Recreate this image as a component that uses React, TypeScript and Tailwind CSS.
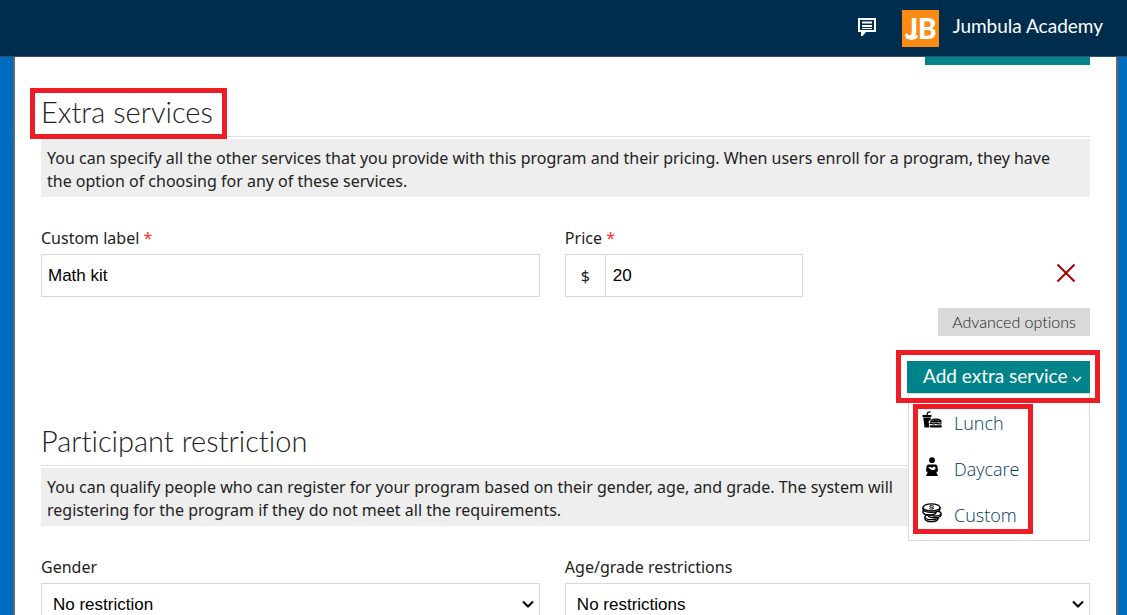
import type { ReactNode } from 'react'

const fieldText = "font-['Liberation_Sans',Arial,sans-serif] text-[17px] text-black"
const titleFont = 'font-[Lato,sans-serif] [font-variant-ligatures:none]'

function MessageIcon() {
  return (
    <svg width="20" height="20" viewBox="0 0 20 20" fill="none" className="mb-0.5" aria-hidden="true">
      <path d="M1 1h18v14H9L5.500 19H4v-4H1z" fill="#fff" />
      <path d="M3 3h14v10H3z" fill="#002d4e" />
      <path d="M5 5.500h10M5 9h10" stroke="#fff" strokeWidth="2" />
      <path d="M5 11.500h10" stroke="#fff" strokeWidth="1" />
    </svg>
  )
}

function Logo() {
  return (
    <svg width="37" height="37" viewBox="0 0 37 37" role="img" aria-label="Jumbula">
      <rect width="37" height="37" fill="#fa8c16" />
      <text x="4" y="29" fill="#fff" fontFamily="Lato, sans-serif" fontWeight="900" fontSize="28">JB</text>
      <path d="M4.500 25c1 4 7 4.500 10 1.500" stroke="#fff" strokeWidth="3" fill="none" strokeLinecap="round" />
    </svg>
  )
}

function LunchIcon() {
  return (
    <svg width="20" height="20" viewBox="0 0 20 20" className="mb-1" aria-hidden="true">
      <path d="M4.800 4.500L5.600 1.800 8.500.6" stroke="#000" strokeWidth="1.200" fill="none" />
      <path d="M.5 4h9v2H.5zM1.200 6.500h7.600V8.500C7 9.500 6.300 11 6.800 12.500L7.300 16.500H2.500z" />
      <path d="M8 11.400c.5-3.400 3-3.800 6-3.800s5.500.6 5.800 3.800z" />
      <path d="M7.500 12.700c2-.9 3.500.8 5 0s3.500.8 7 0" stroke="#000" strokeWidth="1.200" fill="none" />
      <path d="M7.800 14.200h12v1c0 .8-.6 1.300-1.400 1.300H9.200c-.8 0-1.400-.5-1.400-1.300z" />
      <path d="M10.500 9.500h1M13.500 9h1M16.200 9.700h1" stroke="#fff" strokeWidth=".7" />
    </svg>
  )
}

function DaycareIcon() {
  return (
    <svg width="20" height="20" viewBox="0 0 20 20" className="mb-1" aria-hidden="true">
      <circle cx="10" cy="3.200" r="2.900" />
      <path d="M6.300 7.400h7.400c1 0 1.700 1 1.800 2.300l.4 3.600c0 1-.6 1.600-1.600 1.600L16 19H4l1.700-4.100c-1 0-1.600-.6-1.600-1.600l.4-3.600c.1-1.300.8-2.300 1.800-2.300z" />
      <path d="M6.600 10.300c1.300-.7 2.500.2 3.700.8.400-1.700 2.800-1.900 3.200-.2.200 1.500-1.400 2.300-3 2.100-1.700-.2-3.300-1.200-3.900-2.700z" fill="#fff" />
    </svg>
  )
}

function CoinsIcon() {
  return (
    <svg width="20" height="20" viewBox="0 0 20 20" fill="#fff" stroke="#000" strokeWidth="1.300" className="mb-1" aria-hidden="true">
      <path d="M3 14.200v1.800c1 3.500 12 3.500 13 0v-1.800z" />
      <ellipse cx="9.500" cy="14" rx="6.500" ry="2.700" />
      <path d="M6 10.800v1.700c1.500 3 11.500 3 13 0v-1.700z" />
      <ellipse cx="12.500" cy="10.500" rx="6.500" ry="2.500" />
      <path d="M1 7.800v1.800c1.500 3 11.500 3 13 0V7.800z" />
      <path d="M1 4.600v1.700c1.500 4 15.500 4 17 0V4.600z" />
      <ellipse cx="9.500" cy="4.400" rx="8.500" ry="3.600" />
      <path d="M11.900 3.200c-1.400-.9-4.400-.8-4.400.3 0 1.200 4.300.6 4.300 1.800 0 1.100-3.300 1.100-4.700.2" fill="none" strokeWidth="1" />
    </svg>
  )
}

function SectionTitle({ children, marked = false }: { children: ReactNode; marked?: boolean }) {
  return (
    <div className="relative mb-0.5 border-b border-[#e0e0e0] pb-0.5">
      <h2 className={`${titleFont} text-[29px] font-light leading-[45px] text-[#222]`}>{children}</h2>
      {marked && <span className="absolute -left-[11px] -top-px h-[51px] w-[197px] border-5 border-[#ee1c25]" />}
    </div>
  )
}

function Note({ children }: { children: ReactNode }) {
  return <p className="bg-[#eee] pb-1 pl-1.5 pr-3.5 pt-2 leading-[23px]">{children}</p>
}

function Label({ htmlFor, required = false, children }: { htmlFor: string; required?: boolean; children: ReactNode }) {
  return (
    <label htmlFor={htmlFor} className="mb-1 block leading-[23px]">
      {children}
      {required && <span className="text-[#f33]"> *</span>}
    </label>
  )
}

function SelectField({ id, label, option }: { id: string; label: string; option: string }) {
  return (
    <div>
      <Label htmlFor={id}>{label}</Label>
      <div className="relative">
        <select id={id} className={`${fieldText} h-[43px] w-full appearance-none border border-[#d9d9d9] bg-white px-[11px]`}>
          <option>{option}</option>
        </select>
        <svg width="14" height="10" viewBox="0 0 14 10" fill="none" stroke="#000" strokeWidth="2" className="pointer-events-none absolute right-[5px] top-4" aria-hidden="true">
          <path d="M2 2.500l5 5 5-5" />
        </svg>
      </div>
    </div>
  )
}

const services = [
  { name: 'Lunch', icon: <LunchIcon /> },
  { name: 'Daycare', icon: <DaycareIcon /> },
  { name: 'Custom', icon: <CoinsIcon /> },
]

function ServiceMenu() {
  return (
    <div className="relative mt-[25px] flex justify-end">
      <button type="button" className={`${titleFont} flex h-8 w-[183px] items-center gap-1 bg-[#008489] pb-0.5 pl-4 text-[19px] text-white`}>
        Add extra service
        <svg width="10" height="8" viewBox="0 0 10 8" fill="none" stroke="currentColor" strokeWidth="1.500" className="mt-1.5" aria-hidden="true">
          <path d="M1 2l4 4 4-4" />
        </svg>
      </button>
      <ul className="absolute right-0 top-full z-10 h-[148px] w-[182px] border border-[#d9d9d9] bg-white pt-1.5">
        {services.map((s) => (
          <li key={s.name}>
            <a href="#" className="flex h-[46px] items-center gap-3 pl-[13px] font-['Open_Sans',sans-serif] text-[18px] font-light text-[#003a5f]">
              {s.icon}
              {s.name}
            </a>
          </li>
        ))}
      </ul>
      <span className="pointer-events-none absolute -right-[10px] -top-[11px] z-20 h-[53px] w-[204px] border-5 border-[#ee1c25]" />
      <span className="pointer-events-none absolute right-[57px] top-[43px] z-20 h-[130px] w-[120px] border-5 border-[#ee1c25]" />
    </div>
  )
}

export default function App() {
  return (
    <div className="flex h-screen flex-col overflow-hidden bg-[#006cc0] font-['Noto_Sans',sans-serif] text-[16px] text-[#222]">
      <header className="flex h-[57px] shrink-0 items-center justify-end border-b border-[#2f5272] bg-[#002d4e] pr-6">
        <button type="button" aria-label="Messages" className="mr-[25px]">
          <MessageIcon />
        </button>
        <Logo />
        <span className={`${titleFont} ml-3.5 pb-1 text-[19px] text-white`}>Jumbula Academy</span>
      </header>

      <main className="ml-[13px] mr-[9px] flex-1 border-x-2 border-[#666] bg-white px-[26px]">
        <div className="ml-auto h-2 w-[165px] bg-[#008489]" />

        <section className="pt-6">
          <SectionTitle marked>Extra services</SectionTitle>
          <Note>
            You can specify all the other services that you provide with this program and their pricing. When users enroll for a program, they have
            the option of choosing for any of these services.
          </Note>
          <div className="mt-[30px] grid grid-cols-[19fr_20fr] gap-x-[25px]">
            <div>
              <Label htmlFor="label" required>Custom label</Label>
              <input id="label" defaultValue="Math kit" className={`${fieldText} h-[43px] w-full border border-[#d9d9d9] px-1.5`} />
            </div>
            <div className="flex items-end justify-between">
              <div className="w-[238px]">
                <Label htmlFor="price" required>Price</Label>
                <div className="flex h-[43px] border border-[#d9d9d9]">
                  <span className="flex w-10 items-center justify-center border-r border-[#d9d9d9]">$</span>
                  <input id="price" defaultValue="20" className={`${fieldText} min-w-0 flex-1 px-[7px]`} />
                </div>
              </div>
              <button type="button" aria-label="Remove service" className="mb-3.5 mr-3.5">
                <svg width="20" height="20" viewBox="0 0 20 20" stroke="#a80000" strokeWidth="2" aria-hidden="true">
                  <path d="M1.500 1.500l17 17M18.500 1.500l-17 17" />
                </svg>
              </button>
            </div>
          </div>
          <div className="mt-[11px] flex justify-end">
            <button type="button" className={`${titleFont} h-7 w-[152px] bg-[#d9d9d9] text-[16px] font-light text-[#222]`}>
              Advanced options
            </button>
          </div>
          <ServiceMenu />
        </section>

        <section className="pt-[25px]">
          <SectionTitle>Participant restriction</SectionTitle>
          <Note>
            You can qualify people who can register for your program based on their gender, age, and grade. The system will
            <br />
            registering for the program if they do not meet all the requirements.
          </Note>
          <div className="mt-[30px] grid grid-cols-[19fr_20fr] gap-x-[25px]">
            <SelectField id="gender" label="Gender" option="No restriction" />
            <SelectField id="age" label="Age/grade restrictions" option="No restrictions" />
          </div>
        </section>
      </main>
    </div>
  )
}
